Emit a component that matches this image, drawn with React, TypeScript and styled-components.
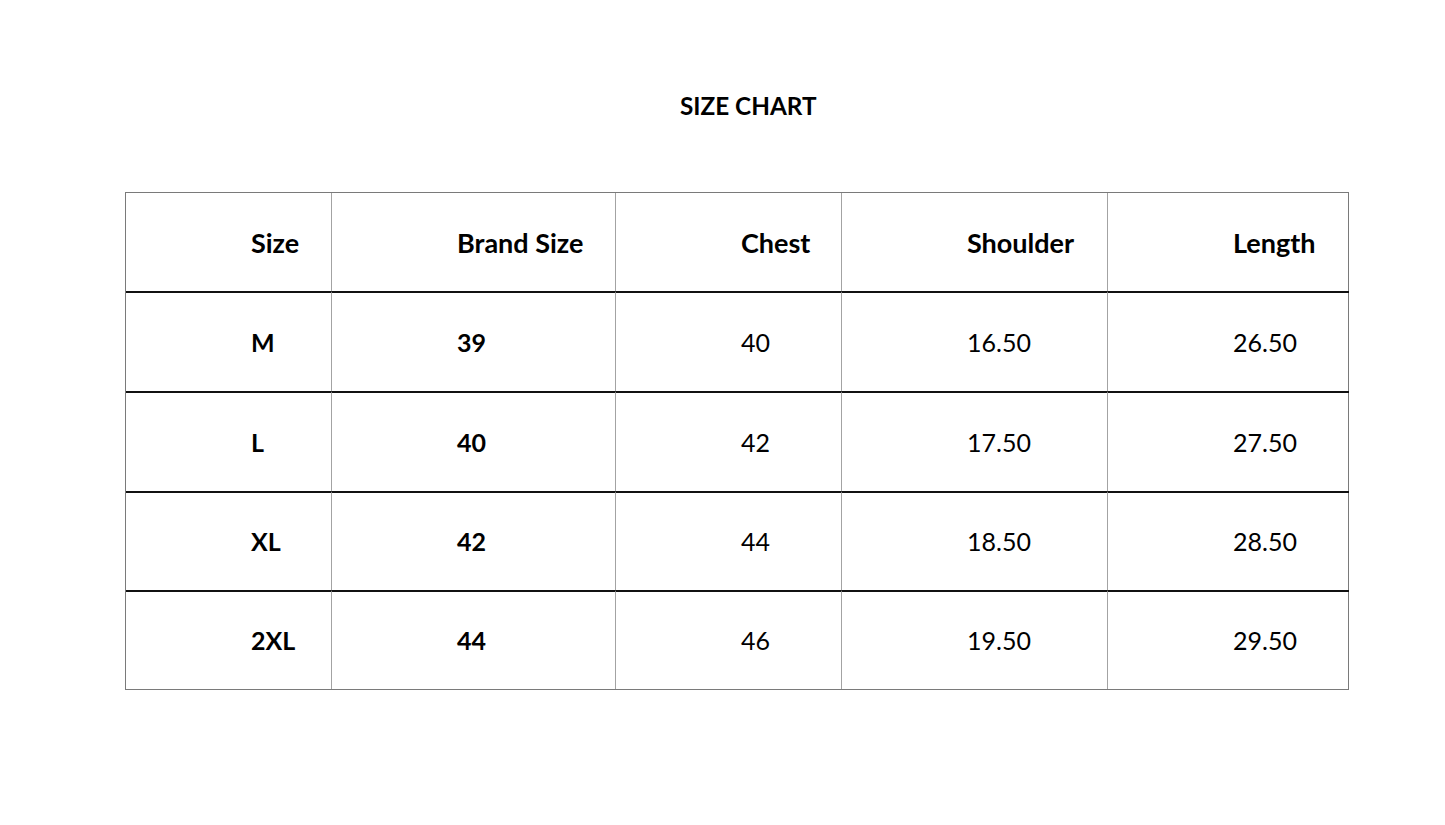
import React from "react";
import styled, { createGlobalStyle } from "styled-components";

const Global = createGlobalStyle`
  html, body { margin: 0; padding: 0; background: #ffffff; }
  body { font-family: Lato, "Open Sans", "Liberation Sans", sans-serif; color: #000; }
`;

const Page = styled.div`
  width: 1445px;
  height: 825px;
  display: flex;
  flex-direction: column;
  padding: 0 0 0 125px;
  box-sizing: border-box;
`;

const Title = styled.h1`
  flex-shrink: 0;
  margin: 0;
  padding: 91px 0 0 555px;
  height: 192px;
  box-sizing: border-box;
  font-size: 24.3px;
  font-weight: 700;
  line-height: 30px;
`;

const Table = styled.div`
  flex-shrink: 0;
  display: grid;
  grid-template-columns: 205px 284px 226px 266px 242px;
  grid-template-rows: 98px 100px 100px 99px 99px;
  width: 1224px;
  border: 1px solid #7a7a7a;
  box-sizing: border-box;
`;

const Cell = styled.div<{ $first: boolean; $head: boolean; $bold: boolean }>`
  display: flex;
  align-items: center;
  padding-left: 125px;
  box-sizing: border-box;
  border-left: ${(p) => (p.$first ? "none" : "1px solid #a3a3a3")};
  border-top: ${(p) => (p.$head ? "none" : "2px solid #111")};
  font-size: ${(p) => (p.$head ? "27px" : "25px")};
  font-weight: ${(p) => (p.$bold ? 700 : 400)};
  line-height: 1;
`;

const headers = ["Size", "Brand Size", "Chest", "Shoulder", "Length"];
const rows = [
  ["M", "39", "40", "16.50", "26.50"],
  ["L", "40", "42", "17.50", "27.50"],
  ["XL", "42", "44", "18.50", "28.50"],
  ["2XL", "44", "46", "19.50", "29.50"],
];

export default function App() {
  return (
    <>
      <Global />
      <Page>
        <Title>SIZE CHART</Title>
        <Table>
          {headers.map((h, i) => (
            <Cell key={h} $first={i === 0} $head $bold>
              {h}
            </Cell>
          ))}
          {rows.map((r, ri) =>
            r.map((v, i) => (
              <Cell key={`${ri}-${i}`} $first={i === 0} $head={false} $bold={i < 2}>
                {v}
              </Cell>
            ))
          )}
        </Table>
      </Page>
    </>
  );
}
